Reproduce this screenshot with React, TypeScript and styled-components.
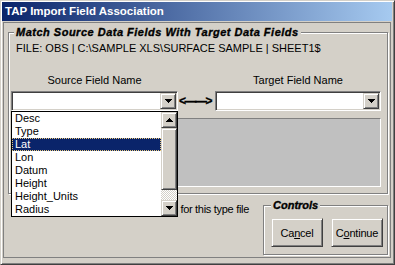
import styled, { createGlobalStyle } from "styled-components";

const GlobalStyle = createGlobalStyle`
  html, body {
    margin: 0;
    padding: 0;
    background: #d4d0c8;
  }
  body {
    font-family: "Liberation Sans", Arial, sans-serif;
    font-size: 11px;
    color: #000;
  }
`;

const sourceFields = [
  "Desc",
  "Type",
  "Lat",
  "Lon",
  "Datum",
  "Height",
  "Height_Units",
  "Radius",
];

const Window = styled.div`
  width: 395px;
  height: 265px;
  box-sizing: border-box;
  display: flex;
  flex-direction: column;
  background: #d4d0c8;
  border: 1px solid;
  border-color: #d4d0c8 #404040 #404040 #d4d0c8;
  box-shadow: inset 1px 1px #fff, inset -1px -1px #808080;
  padding: 1px 2px 6px 1px;
`;

const TitleBar = styled.div`
  flex: none;
  height: 19px;
  line-height: 19px;
  padding-left: 3px;
  background: linear-gradient(to right, #0a246a, #a6caf0);
  color: #fff;
  font-weight: bold;
  font-size: 11.5px;
  white-space: nowrap;
`;

const Panel = styled.div`
  flex: 1;
  margin: 1px 1px 0 1px;
  border: 1px solid #808080;
  display: flex;
  flex-direction: column;
`;

const GroupBox = styled.div<{ $w?: number; $h: number }>`
  position: relative;
  box-sizing: border-box;
  height: ${(p) => p.$h}px;
  ${(p) => (p.$w ? `width: ${p.$w}px;` : "")}
  border: 1px solid #808080;
  box-shadow: inset 1px 1px #fff, 1px 1px #fff;
`;

const MainGroup = styled(GroupBox)`
  margin: 9px 2px 0 4px;
  padding: 9px 6px 6px 2px;
  display: flex;
  flex-direction: column;
`;

const Legend = styled.span`
  position: absolute;
  top: -7px;
  left: 5px;
  padding: 0 2px;
  line-height: 13px;
  background: #d4d0c8;
  font-weight: bold;
  font-style: italic;
  letter-spacing: 0.5px;
  -webkit-text-stroke: 0.35px #000;
  white-space: nowrap;
`;

const FileLine = styled.div`
  margin-left: 5px;
  line-height: 13px;
  white-space: nowrap;
`;

const FieldGrid = styled.div`
  display: grid;
  grid-template-columns: 167px 37px 166px;
  align-items: center;
`;

const LabelRow = styled(FieldGrid)`
  margin-top: 19px;
  line-height: 13px;
`;

const ColLabel = styled.div`
  text-align: center;
  white-space: nowrap;
`;

const ComboRow = styled(FieldGrid)`
  margin-top: 4px;
  position: relative;
  z-index: 2;
`;

const ComboWrap = styled.div`
  position: relative;
`;

const Combo = styled.div`
  height: 20px;
  box-sizing: border-box;
  background: #fff;
  border: 1px solid;
  border-color: #808080 #fff #fff #808080;
  box-shadow: inset 1px 1px #404040, inset -1px -1px #d4d0c8;
  padding: 1px;
  display: flex;
  justify-content: flex-end;
`;

const Raised = styled.div`
  box-sizing: border-box;
  background: #d4d0c8;
  border: 1px solid;
  border-color: #d4d0c8 #404040 #404040 #d4d0c8;
  box-shadow: inset 1px 1px #fff, inset -1px -1px #808080;
`;

const ArrowButton = styled(Raised)`
  width: 16px;
  height: 16px;
  flex: none;
  display: flex;
  align-items: center;
  justify-content: center;
`;

const Thumb = styled(Raised)`
  height: 62px;
`;

const Track = styled.div`
  flex: 1;
  background: repeating-conic-gradient(#d4d0c8 0 25%, #fff 0 50%) 0 0 / 2px 2px;
`;

const Linker = styled.div`
  text-align: center;
  font-weight: bold;
  font-size: 12px;
  letter-spacing: -1.5px;
  -webkit-text-stroke: 0.3px #000;
  white-space: nowrap;
  padding-right: 3px;
`;

const DropList = styled.div`
  position: absolute;
  top: 20px;
  left: 0;
  width: 167px;
  height: 106px;
  box-sizing: border-box;
  border: 1px solid #000;
  background: #fff;
  display: flex;
`;

const Items = styled.div`
  flex: 1;
  display: flex;
  flex-direction: column;
`;

const Item = styled.div<{ $selected?: boolean }>`
  height: 13px;
  line-height: 13px;
  padding-left: 3px;
  white-space: nowrap;
  background: ${(p) => (p.$selected ? "#0a246a" : "transparent")};
  color: ${(p) => (p.$selected ? "#fff" : "#000")};
  ${(p) => (p.$selected ? "outline: 1px dotted #e8c878; outline-offset: -1px;" : "")}
`;

const ScrollBar = styled.div`
  width: 16px;
  flex: none;
  display: flex;
  flex-direction: column;
`;

const GrayBox = styled.div`
  margin-top: 7px;
  height: 69px;
  box-sizing: border-box;
  background: #c0c0c0;
  border: 1px solid;
  border-color: #808080 #fff #fff #808080;
`;

const BottomRow = styled.div`
  flex: 1;
  display: flex;
`;

const DefaultsNote = styled.div`
  flex: 1;
  padding: 9px 14px 0 0;
  text-align: right;
  line-height: 13px;
  white-space: nowrap;
  letter-spacing: -0.3px;
`;

const ControlsGroup = styled(GroupBox)`
  margin: 11px 2px 0 0;
  padding: 12px 4px 0 7px;
  display: flex;
  gap: 8px;
  align-items: flex-start;
`;

const ControlsLegend = styled(Legend)`
  left: 7px;
  letter-spacing: 0;
`;

const PushButton = styled(Raised)`
  width: 52px;
  height: 29px;
  display: flex;
  align-items: center;
  justify-content: center;
  white-space: nowrap;
  letter-spacing: -0.2px;
`;

function Triangle({ up }: { up?: boolean }) {
  return (
    <svg width="7" height="4" viewBox="0 0 7 4" shapeRendering="crispEdges">
      <path
        d="M0 0h7v1H0zM1 1h5v1H1zM2 2h3v1H2zM3 3h1v1H3z"
        fill="#000"
        transform={up ? "rotate(180 3.5 2)" : undefined}
      />
    </svg>
  );
}

export default function App() {
  return (
    <>
      <GlobalStyle />
      <Window>
        <TitleBar>TAP Import Field Association</TitleBar>
        <Panel>
          <MainGroup $h={162}>
            <Legend>Match Source Data Fields With Target Data Fields</Legend>
            <FileLine>FILE: OBS | C:\SAMPLE XLS\SURFACE SAMPLE | SHEET1$</FileLine>
            <LabelRow>
              <ColLabel>Source Field Name</ColLabel>
              <span />
              <ColLabel>Target Field Name</ColLabel>
            </LabelRow>
            <ComboRow>
              <ComboWrap>
                <Combo>
                  <ArrowButton>
                    <Triangle />
                  </ArrowButton>
                </Combo>
                <DropList>
                  <Items>
                    {sourceFields.map((f) => (
                      <Item key={f} $selected={f === "Lat"}>
                        {f}
                      </Item>
                    ))}
                  </Items>
                  <ScrollBar>
                    <ArrowButton>
                      <Triangle up />
                    </ArrowButton>
                    <Thumb />
                    <Track />
                    <ArrowButton>
                      <Triangle />
                    </ArrowButton>
                  </ScrollBar>
                </DropList>
              </ComboWrap>
              <Linker>{"<\u2014\u2014>"}</Linker>
              <Combo>
                <ArrowButton>
                  <Triangle />
                </ArrowButton>
              </Combo>
            </ComboRow>
            <GrayBox />
          </MainGroup>
          <BottomRow>
            <DefaultsNote>Save as defaults for this type file</DefaultsNote>
            <ControlsGroup $w={125} $h={50}>
              <ControlsLegend>Controls</ControlsLegend>
              <PushButton>
                Ca<u>n</u>cel
              </PushButton>
              <PushButton>
                C<u>o</u>ntinue
              </PushButton>
            </ControlsGroup>
          </BottomRow>
        </Panel>
      </Window>
    </>
  );
}
